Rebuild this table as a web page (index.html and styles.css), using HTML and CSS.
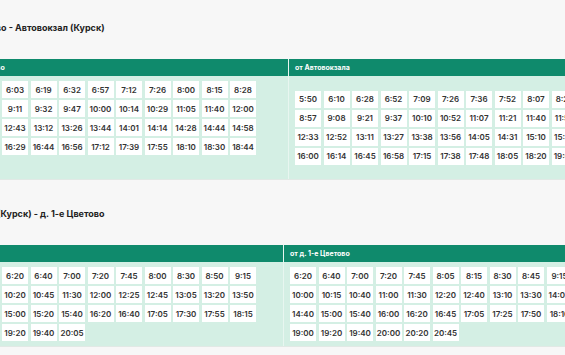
FILE: index.html
```html
<!DOCTYPE html>
<html lang="ru">
<head>
<meta charset="utf-8">
<title>Расписание</title>
<link rel="stylesheet" href="styles.css">
</head>
<body>
<div class="page">
  <section class="route">
    <h2 class="route-title">д. 1-е Цветово - Автовокзал (Курск)</h2>
    <div class="table table--first">
      <div class="col">
        <div class="col-head">от д. 1-е Цветово</div>
        <div class="col-body">
          <div class="times">
            <span class="time">5:30</span><span class="time">5:45</span><span class="time">6:03</span><span class="time">6:19</span><span class="time">6:32</span><span class="time">6:57</span><span class="time">7:12</span><span class="time">7:26</span><span class="time">8:00</span><span class="time">8:15</span><span class="time">8:28</span>
            <span class="time">8:43</span><span class="time">8:57</span><span class="time">9:11</span><span class="time">9:32</span><span class="time">9:47</span><span class="time">10:00</span><span class="time">10:14</span><span class="time">10:29</span><span class="time">11:05</span><span class="time">11:40</span><span class="time">12:00</span>
            <span class="time">12:15</span><span class="time">12:29</span><span class="time">12:43</span><span class="time">13:12</span><span class="time">13:26</span><span class="time">13:44</span><span class="time">14:01</span><span class="time">14:14</span><span class="time">14:28</span><span class="time">14:44</span><span class="time">14:58</span>
            <span class="time">15:46</span><span class="time">16:12</span><span class="time">16:29</span><span class="time">16:44</span><span class="time">16:56</span><span class="time">17:12</span><span class="time">17:39</span><span class="time">17:55</span><span class="time">18:10</span><span class="time">18:30</span><span class="time">18:44</span>
            <span class="time">19:05</span><span class="time">19:30</span>
          </div>
        </div>
      </div>
      <div class="col">
        <div class="col-head">от Автовокзала</div>
        <div class="col-body">
          <div class="times times--wide">
            <span class="time">5:50</span><span class="time">6:10</span><span class="time">6:28</span><span class="time">6:52</span><span class="time">7:09</span><span class="time">7:26</span><span class="time">7:36</span><span class="time">7:52</span><span class="time">8:07</span><span class="time">8:22</span><span class="time">8:34</span><span class="time">8:45</span>
            <span class="time">8:57</span><span class="time">9:08</span><span class="time">9:21</span><span class="time">9:37</span><span class="time">10:10</span><span class="time">10:52</span><span class="time">11:07</span><span class="time">11:21</span><span class="time">11:40</span><span class="time">11:55</span><span class="time">12:08</span><span class="time">12:20</span>
            <span class="time">12:33</span><span class="time">12:52</span><span class="time">13:11</span><span class="time">13:27</span><span class="time">13:38</span><span class="time">13:56</span><span class="time">14:05</span><span class="time">14:31</span><span class="time">15:10</span><span class="time">15:25</span><span class="time">15:38</span><span class="time">15:47</span>
            <span class="time">16:00</span><span class="time">16:14</span><span class="time">16:45</span><span class="time">16:58</span><span class="time">17:15</span><span class="time">17:38</span><span class="time">17:48</span><span class="time">18:05</span><span class="time">18:20</span><span class="time">19:00</span><span class="time">19:20</span><span class="time">19:40</span>
          </div>
        </div>
      </div>
    </div>
  </section>

  <section class="route">
    <h2 class="route-title">Автовокзал (Курск) - д. 1-е Цветово</h2>
    <div class="table table--second">
      <div class="col">
        <div class="col-head">от Автовокзала</div>
        <div class="col-body">
          <div class="times">
            <span class="time">5:40</span><span class="time">6:00</span><span class="time">6:20</span><span class="time">6:40</span><span class="time">7:00</span><span class="time">7:20</span><span class="time">7:45</span><span class="time">8:00</span><span class="time">8:30</span><span class="time">8:50</span><span class="time">9:15</span>
            <span class="time">9:40</span><span class="time">10:00</span><span class="time">10:20</span><span class="time">10:45</span><span class="time">11:30</span><span class="time">12:00</span><span class="time">12:25</span><span class="time">12:45</span><span class="time">13:05</span><span class="time">13:20</span><span class="time">13:50</span>
            <span class="time">14:20</span><span class="time">14:40</span><span class="time">15:00</span><span class="time">15:20</span><span class="time">15:40</span><span class="time">16:20</span><span class="time">16:40</span><span class="time">17:05</span><span class="time">17:30</span><span class="time">17:55</span><span class="time">18:15</span>
            <span class="time">18:40</span><span class="time">19:00</span><span class="time">19:20</span><span class="time">19:40</span><span class="time">20:05</span>
          </div>
        </div>
      </div>
      <div class="col">
        <div class="col-head">от д. 1-е Цветово</div>
        <div class="col-body">
          <div class="times times--wide">
            <span class="time">6:20</span><span class="time">6:40</span><span class="time">7:00</span><span class="time">7:20</span><span class="time">7:45</span><span class="time">8:05</span><span class="time">8:15</span><span class="time">8:30</span><span class="time">8:45</span><span class="time">9:15</span><span class="time">9:40</span><span class="time">9:55</span>
            <span class="time">10:00</span><span class="time">10:15</span><span class="time">10:40</span><span class="time">11:00</span><span class="time">11:30</span><span class="time">12:20</span><span class="time">12:40</span><span class="time">13:10</span><span class="time">13:30</span><span class="time">14:00</span><span class="time">14:20</span><span class="time">14:30</span>
            <span class="time">14:40</span><span class="time">15:00</span><span class="time">15:40</span><span class="time">16:00</span><span class="time">16:20</span><span class="time">16:45</span><span class="time">17:05</span><span class="time">17:25</span><span class="time">17:50</span><span class="time">18:10</span><span class="time">18:30</span><span class="time">18:45</span>
            <span class="time">19:00</span><span class="time">19:20</span><span class="time">19:40</span><span class="time">20:00</span><span class="time">20:20</span><span class="time">20:45</span>
          </div>
        </div>
      </div>
    </div>
  </section>
</div>
</body>
</html>
```

FILE: styles.css
```css
* { box-sizing: border-box; }

html, body {
  margin: 0;
  padding: 0;
  background: #f7f7f7;
  overflow: hidden;
}

body {
  font-family: Inter, "Noto Sans", "DejaVu Sans", sans-serif;
  color: #333;
}

.page {
  width: 820px;
  margin-left: -61px;
  padding-top: 22px;
  display: flex;
  flex-direction: column;
  gap: 28px;
}

.route-title {
  margin: 0 0 25px;
  padding-left: 3px;
  font-size: 9px;
  line-height: 12px;
  font-weight: 700;
  color: #222;
  white-space: nowrap;
}

.table {
  display: grid;
  column-gap: 1px;
  background: #e8f6f0;
  border-bottom: 1px solid #e1e9e5;
}

.table--first { grid-template-columns: 349px 1fr; }
.table--second { grid-template-columns: 344px 1fr; }

.col {
  display: flex;
  flex-direction: column;
  background: #d4efe4;
}

.col-head {
  height: 17px;
  padding: 0 6px;
  display: flex;
  align-items: center;
  background: #0f8a6c;
  color: #fff;
  font-size: 7px;
  font-weight: 700;
  white-space: nowrap;
}

.col-body {
  flex: 1;
  display: flex;
  align-items: center;
  padding: 5px 6px;
}

.times {
  display: grid;
  grid-template-columns: repeat(11, 26px);
  gap: 2px 2.5px;
}

.times--wide {
  grid-template-columns: repeat(12, 26px);
}

.time {
  height: 17px;
  display: flex;
  align-items: center;
  justify-content: center;
  background: #fff;
  font-size: 8px;
  font-weight: 600;
  color: #333;
  white-space: nowrap;
}
```
